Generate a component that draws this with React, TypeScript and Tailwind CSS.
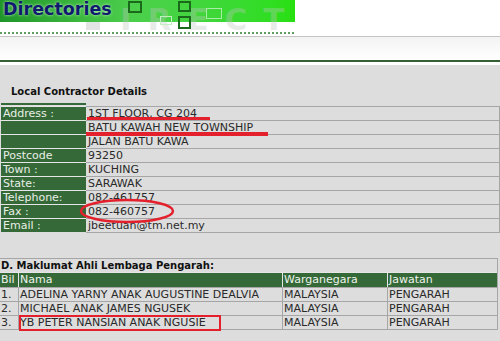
import React from "react";

const details = [
  { label: "Address :", value: "1ST FLOOR, CG 204" },
  { label: "", value: "BATU KAWAH NEW TOWNSHIP" },
  { label: "", value: "JALAN BATU KAWA" },
  { label: "Postcode", value: "93250" },
  { label: "Town :", value: "KUCHING" },
  { label: "State:", value: "SARAWAK" },
  { label: "Telephone:", value: "082-461757" },
  { label: "Fax :", value: "082-460757" },
  { label: "Email :", value: "jbeetuan@tm.net.my" },
];

const directors = [
  { no: "1.", name: "ADELINA YARNY ANAK AUGUSTINE DEALVIA", nation: "MALAYSIA", post: "PENGARAH" },
  { no: "2.", name: "MICHAEL ANAK JAMES NGUSEK", nation: "MALAYSIA", post: "PENGARAH" },
  { no: "3.", name: "YB PETER NANSIAN ANAK NGUSIE", nation: "MALAYSIA", post: "PENGARAH" },
];

// logo artwork: faded letters and little squares behind the title
function BannerArt() {
  return (
    <svg className="absolute left-0 top-0" width="330" height="42" viewBox="0 0 330 42" aria-hidden="true">
      <rect x="86" y="22" width="14" height="8" fill="#e4e4e4" />
      <text
        x="120"
        y="30"
        fontFamily="DejaVu Sans, sans-serif"
        fontWeight="bold"
        fontSize="31"
        letterSpacing="16"
        fill="rgba(190,200,190,0.35)"
      >
        IRECT
      </text>
      <rect x="129" y="2" width="12" height="10" fill="none" stroke="#1b6a1b" strokeWidth="2" />
      <rect x="179" y="2" width="11" height="9" fill="none" stroke="#1b6a1b" strokeWidth="2" />
      <rect x="179" y="17" width="11" height="11" fill="none" stroke="#1b6a1b" strokeWidth="2" />
      <rect x="160.5" y="16.5" width="11" height="8" fill="none" stroke="#c2eec2" strokeWidth="1" />
      <rect x="206.5" y="8.5" width="15" height="10" fill="none" stroke="#a8eca8" strokeWidth="1" />
    </svg>
  );
}

function Banner() {
  return (
    <div className="relative h-[37px] flex flex-col">
      <div className="h-[22px] w-[295px] bg-gradient-to-r from-[#1f962a] via-[#4ccf4c] via-45% to-[#28e010]" />
      <BannerArt />
      <span className="absolute left-[3px] top-0 text-[17.5px] leading-[19px] font-bold text-[#0f1a6e] [text-shadow:0_0_3px_#c8f5c8]">
        Directories
      </span>
      <div className="mt-[10px] w-[294px] border-t-2 border-dotted border-[#5f9f5f]" />
      <div className="mt-[2px] h-px bg-[#c4c4c4]" />
    </div>
  );
}

export default function App() {
  return (
    <div className="relative w-[500px] h-[341px] overflow-hidden bg-white font-['DejaVu_Sans',sans-serif] text-[#2a2a2a]">
      <Banner />
      <div className="h-[23px] bg-gradient-to-b from-[#f3f3f3] to-white" />
      <div className="h-[2px] bg-[#355f35]" />
      <div className="h-[3px] bg-white" />

      <div className="bg-[#dddddd] h-[276px] pt-[20px]">
        <div className="pl-[11px] h-[14px] text-[10px] leading-[14px] font-bold text-[#111]">
          Local Contractor Details
        </div>

        <div className="mt-[4px] ml-[1px] w-[499px]">
          <div className="flex h-[3px]">
            <div className="w-[85px] h-[2px] bg-[#356a38]" />
          </div>
          {details.map((d, i) => (
            <div key={i} className="flex h-[14px] text-[11px] leading-[13px]">
              <div className="w-[85px] border-t border-[#e6e6e6] bg-[#356a38] pl-[2px] text-[#e8efe6] whitespace-nowrap">
                {d.label}
              </div>
              <div className="flex-1 border-t border-r border-[#a6a6a6] pl-[2px] whitespace-nowrap">
                {d.value}
              </div>
            </div>
          ))}
          <div className="flex h-px">
            <div className="w-[85px]" />
            <div className="flex-1 bg-[#a6a6a6]" />
          </div>
        </div>

        <div className="mt-[25px] w-[498px] border-t border-r border-[#a6a6a6]">
          <div className="h-[13px] pl-[1px] text-[10px] leading-[13px] font-bold text-[#111]">
            D. Maklumat Ahli Lembaga Pengarah:
          </div>
          <div className="flex h-[15px] text-[11px] leading-[14px] text-[#eef3ec]">
            <div className="w-[18px] border-t border-[#e6e6e6] bg-[#356a38] pl-[1px]">Bil</div>
            <div className="w-[264px] border-t border-l border-[#e6e6e6] bg-[#356a38] pl-[1px]">Nama</div>
            <div className="w-[105px] border-t border-l border-[#e6e6e6] bg-[#356a38] pl-[1px]">Warganegara</div>
            <div className="flex-1 border-t border-l border-[#e6e6e6] bg-[#356a38] pl-[1px]">Jawatan</div>
          </div>
          {directors.map((r, i) => (
            <div
              key={i}
              className={`flex h-[14px] text-[11px] leading-[13px] border-t border-[#a6a6a6] ${
                i === directors.length - 1 ? "border-b h-[15px]" : ""
              }`}
            >
              <div className="w-[18px] pl-[1px]">{r.no}</div>
              <div className="w-[264px] border-l border-[#a6a6a6] pl-[1px] whitespace-nowrap">{r.name}</div>
              <div className="w-[105px] border-l border-[#a6a6a6] pl-[1px]">{r.nation}</div>
              <div className="flex-1 border-l border-[#a6a6a6] pl-[1px]">{r.post}</div>
            </div>
          ))}
        </div>
      </div>

      {/* red annotations drawn over the page */}
      <div className="absolute left-[87px] top-[117px] w-[123px] h-[3px] bg-[#e3202c]" />
      <div className="absolute left-[86px] top-[132px] w-[182px] h-[4px] bg-[#e3202c]" />
      <svg className="absolute left-[78px] top-[198px]" width="98" height="26" viewBox="0 0 98 26">
        <ellipse cx="49" cy="13" rx="46" ry="11" fill="none" stroke="#e3202c" strokeWidth="2.5" />
      </svg>
      <div className="absolute left-[19px] top-[315px] w-[202px] h-[16px] border-2 border-[#e3202c]" />
    </div>
  );
}
